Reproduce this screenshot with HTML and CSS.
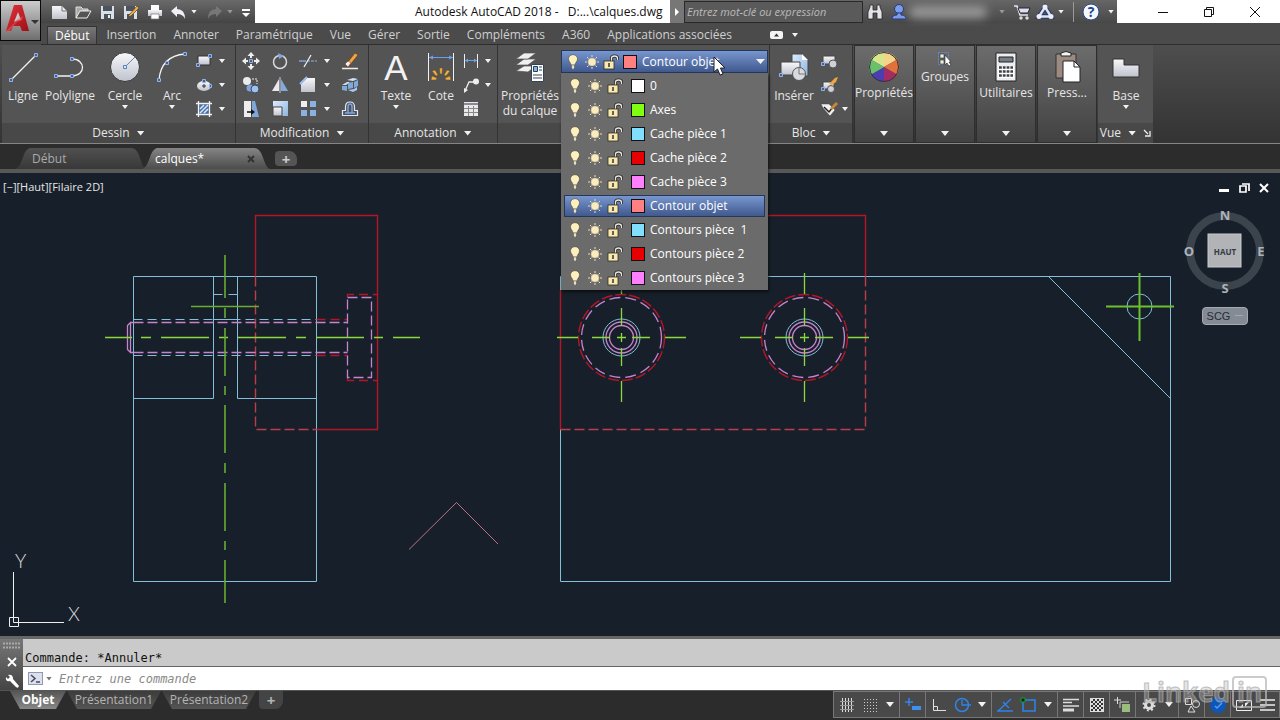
FILE: index.html
```html
<!DOCTYPE html>
<html lang="fr">
<head>
<meta charset="utf-8">
<title>Autodesk AutoCAD 2018 - calques.dwg</title>
<link rel="stylesheet" href="styles.css">
</head>
<body>
<svg class="sprite" aria-hidden="true">
  <defs>
    <linearGradient id="face" x1="0" y1="0" x2="0" y2="1"><stop offset="0" stop-color="#f8f8fb"/><stop offset="1" stop-color="#bfc2cc"/></linearGradient>
    <linearGradient id="faceBlue" x1="0" y1="0" x2="1" y2="1"><stop offset="0" stop-color="#dcecff"/><stop offset="1" stop-color="#8db4dc"/></linearGradient>
    <linearGradient id="redA" x1="0" y1="0" x2="1" y2="1"><stop offset="0" stop-color="#e2343c"/><stop offset="1" stop-color="#9c1018"/></linearGradient>
  </defs>
  <symbol id="bulb" viewBox="0 0 12 16"><path d="M6 .7c2.700 0 4.500 1.900 4.500 4.300C10.500 7.200 8.200 8.500 8 11H4C3.800 8.500 1.500 7.200 1.500 5 1.500 2.600 3.300.7 6 .7z" fill="#fdf0c0" stroke="#40391f" stroke-width=".5"/><path d="M4.500 11h3v2.500l-1 2h-1l-1-2z" fill="#e6dfc8" stroke="#333" stroke-width=".4"/></symbol>
  <symbol id="sun" viewBox="0 0 16 16"><path d="M8 1v2M8 13v2M1 8h2M13 8h2M3 3l1.500 1.500M11.500 11.500L13 13M13 3l-1.500 1.500M4.500 11.500L3 13" stroke="#e6dfc4" stroke-width="1"/><circle cx="8" cy="8" r="4" fill="#fbecc0" stroke="#b8ab80" stroke-width=".5"/></symbol>
  <symbol id="lock" viewBox="0 0 16 16"><path d="M8.500 8V4.500q0-2.500 3-2.500t3 2.500V6" fill="none" stroke="#222" stroke-width="3"/><path d="M8.500 8V4.500q0-2.500 3-2.500t3 2.500V6" fill="none" stroke="#e8e6dc" stroke-width="1.400"/><rect x="1" y="7" width="10" height="8" fill="#fae9b0" stroke="#302b1c" stroke-width=".8"/><path d="M6 9v4" stroke="#333" stroke-width="1.500"/></symbol>
</svg>

<header class="app-header">
  <button class="logo" aria-label="Menu de l'application">
    <svg width="38" height="36" viewBox="0 0 38 36"><path d="M4 28L12 2h8l7 26h-7l-2-5h-7l-2 5z" fill="url(#redA)"/><path d="M12 19l4-10 3 8q-4 0-7 2z" fill="#c9c9c9"/><path d="M4 28l12-12 5-3-1 4q-5 1-8 5l-4 6z" fill="#f05258" opacity=".6"/><path d="M29 17h8l-4 4z" fill="#333"/></svg>
  </button>
  <div class="titlebar">
    <div class="qat">
      <button aria-label="Nouveau"><svg width="20" height="18"><path d="M3 3h10l5 5v8H3z" fill="url(#face)"/><path d="M13 3v5h5" fill="none" stroke="#777"/></svg></button>
      <button aria-label="Ouvrir"><svg width="20" height="18"><path d="M3 15V4h5l2 2h5v2H8z" fill="#aaa" stroke="#ddd"/><path d="M3 15L7 8h11l-4 7z" fill="#555" stroke="#eee"/></svg></button>
      <button aria-label="Enregistrer"><svg width="20" height="18"><path d="M4 3h13v13H4z" fill="#dbe0e8"/><path d="M6 3h9v5H6zM7 11h7v5H7z" fill="#4b535e"/><path d="M11 12h2v3h-2z" fill="#eee"/></svg></button>
      <button aria-label="Enregistrer sous"><svg width="20" height="18"><path d="M3 3h13v13H3z" fill="#dbe0e8"/><path d="M5 3h9v5H5zM6 11h7v5H6z" fill="#4b535e"/><path d="M8 12l8-9 2 2-8 8-3 1z" fill="#eab04a" stroke="#5d3c0c" stroke-width=".7"/></svg></button>
      <button aria-label="Imprimer"><svg width="20" height="18"><path d="M6 2h8v5H6z" fill="#fff"/><path d="M3 7h14v6H3z" fill="url(#face)"/><path d="M6 11h8v5H6z" fill="#fff" stroke="#777" stroke-width=".7"/></svg></button>
      <button aria-label="Annuler"><svg width="20" height="18"><path d="M2 8l6-5v3q8 0 8 10-2-5-8-5v3z" fill="#eef0f4"/></svg></button><i class="caret"></i>
      <button aria-label="Rétablir"><svg width="20" height="18"><path d="M17 8l-6-5v3q-8 0-8 10 2-5 8-5v3z" fill="#777"/></svg></button><i class="caret dim"></i>
      <button class="more" aria-label="Personnaliser"><svg width="10" height="18"><path d="M1 6h8v2H1zM1 10h8l-4 4z" fill="#fff"/></svg></button>
    </div>
    <h1 class="doc-title">Autodesk AutoCAD 2018 -&nbsp;&nbsp; D:...\calques.dwg</h1>
    <div class="infocenter">
      <button class="expand" aria-label="Afficher"><svg width="12" height="20"><path d="M4 6l4 4-4 4z" fill="#fff"/></svg></button>
      <input class="search" type="text" placeholder="Entrez mot-clé ou expression" aria-label="Recherche">
      <button aria-label="Rechercher"><svg width="24" height="20"><path d="M5 17V10l2-5V3h3v5h4V3h3v2l2 5v7h-5v-6h-4v6z" fill="#e4e4e8" stroke="#26262a" stroke-width=".8"/></svg></button>
      <button class="user" aria-label="Compte"><svg width="20" height="20"><circle cx="10" cy="7" r="4.500" fill="#7b9cea" stroke="#243a78"/><path d="M3 17q0-4 5-4v-2h4v2q5 0 5 4z" fill="#7b9cea" stroke="#243a78"/></svg><span class="user-name"></span><i class="caret dim"></i></button>
      <button aria-label="App Store"><svg width="24" height="20"><path d="M4 4h3l3 9h8" fill="none" stroke="#e4e4ee" stroke-width="1.600"/><path d="M8 6h12l-2 5H10z" fill="#dde" stroke="#223"/><circle cx="11" cy="16" r="1.700" fill="#ddd"/><circle cx="17" cy="16" r="1.700" fill="#ddd"/></svg></button>
      <button aria-label="A360"><svg width="24" height="20"><path d="M11 5l6 9.500H5z" fill="none" stroke="#24386a" stroke-width="4.500"/><path d="M11 5l6 9.500H5z" fill="none" stroke="#dbe2f4" stroke-width="2.500"/><g fill="#eef"><circle cx="11" cy="5" r="2.500"/><circle cx="5" cy="14.500" r="2.500"/><circle cx="17" cy="14.500" r="2.500"/></g></svg></button><i class="caret"></i>
      <button class="help" aria-label="Aide"><svg width="20" height="20"><circle cx="10" cy="10" r="8" fill="#f5f7fc" stroke="#274a8a"/><text x="10" y="15" text-anchor="middle" class="help-mark">?</text></svg></button><i class="caret"></i>
    </div>
    <div class="window-controls">
      <button aria-label="Réduire"><svg width="12" height="12"><path d="M1 6.500h10" stroke="#111"/></svg></button>
      <button aria-label="Restaurer"><svg width="12" height="12"><path d="M1.500 3.500h7v7h-7zM3.500 3V1.500h7v7H9" fill="none" stroke="#111"/></svg></button>
      <button aria-label="Fermer"><svg width="12" height="12"><path d="M1 1l10 10M11 1L1 11" stroke="#111"/></svg></button>
    </div>
  </div>
  <nav class="ribbon-tabs">
    <button class="active">Début</button><button>Insertion</button><button>Annoter</button><button>Paramétrique</button><button>Vue</button><button>Gérer</button><button>Sortie</button><button>Compléments</button><button>A360</button><button>Applications associées</button>
    <button class="collapse" aria-label="Réduire le ruban"><svg width="14" height="8"><rect width="13" height="8" rx="2" fill="#f4f4f4"/><path d="M4 5.500h5L6.500 2.500z" fill="#333"/></svg><i class="caret"></i></button>
  </nav>
</header>

<section class="ribbon">
  <div class="panel">
    <div class="panel-body">
      <button class="big w40"><svg width="32" height="32"><path d="M4 29L29 4" stroke="#f2f2f2" stroke-width="1.300"/><g class="grip"><path d="M2.500 27.500h3v3h-3zM27.500 2.500h3v3h-3z"/></g></svg>Ligne</button>
      <button class="big w54"><svg width="32" height="32"><path d="M2 25h16c14 0 14-17 0-17" fill="none" stroke="#f2f2f2" stroke-width="1.300"/><g class="grip"><path d="M.5 23.500h3v3h-3zM16.500 23.500h3v3h-3zM16.500 6.500h3v3h-3z"/></g></svg>Polyligne</button>
      <button class="big w56"><svg width="32" height="32"><circle cx="16" cy="16" r="14.500" fill="url(#face)" stroke="#383838"/><path d="M16 16L26 6" stroke="#777fa0"/><g class="grip light"><path d="M14.500 14.500h3v3h-3z"/></g></svg>Cercle<i class="caret"></i></button>
      <button class="big w38"><svg width="32" height="32"><path d="M3 29Q5 5 29 3" fill="none" stroke="#f2f2f2" stroke-width="1.300"/><g class="grip"><path d="M1.500 27.500h3v3h-3zM9.500 10.500h3v3h-3zM27.500 1.500h3v3h-3z"/></g></svg>Arc<i class="caret"></i></button>
      <div class="tools draw-tools">
        <button aria-label="Rectangle"><svg width="18" height="18"><path d="M3 4h12v9H3z" fill="url(#face)" stroke="#333"/><g class="grip"><path d="M1.500 11.500h3v3h-3zM13.500 2.500h3v3h-3z"/></g></svg></button><i class="caret"></i>
        <button aria-label="Ellipse"><svg width="18" height="18"><ellipse cx="9" cy="10" rx="7" ry="5" fill="url(#face)"/><path d="M7 10h4M9 8v4" stroke="#333"/><g class="grip"><path d="M7.500 3.500h3v3h-3zM14.500 8.500h2v3h-2z"/></g></svg></button><i class="caret"></i>
        <button aria-label="Hachures"><svg width="18" height="18"><path d="M4 4h10v10H4z" fill="#496da5"/><path d="M1 3.500h16M1 14.500h16M3.500 1v16M14.500 1v16" stroke="#f2f2f2" stroke-width="1.300"/><path d="M5 9l4-4M5 13l8-8M9 13l4-4" stroke="#d8e8ff" stroke-width="1.500"/></svg></button><i class="caret"></i>
      </div>
    </div>
    <button class="panel-title">Dessin<i class="caret wide"></i></button>
  </div>
  <div class="panel">
    <div class="panel-body">
      <div class="tools modify-tools">
        <button aria-label="Déplacer"><svg width="18" height="18"><path d="M9 0l3.500 4h-7zM9 18l3.500-4h-7zM0 9l4-3.500v7zM18 9l-4-3.500v7zM8 4h2v2H8zM8 12h2v2H8zM4 8h2v2H4zM12 8h2v2h-2z" fill="#eee"/><g class="grip"><path d="M7.500 7.500h3v3h-3z"/></g></svg></button>
        <button aria-label="Rotation"><svg width="18" height="18"><circle cx="9" cy="10" r="6.500" fill="none" stroke="#d8d8de" stroke-width="1.500"/><path d="M7 1l6 3-5 3z" fill="#7fa5e0"/></svg></button>
        <button aria-label="Ajuster"><svg width="18" height="18"><path d="M0 9h7" stroke="#7ba2e2" stroke-width="1.500"/><path d="M8 9h10" stroke="#91b1e4" stroke-dasharray="3 1"/><path d="M5 15L12 3" stroke="#eee" stroke-width="1.300"/></svg></button><i class="caret"></i>
        <button aria-label="Effacer"><svg width="18" height="18"><path d="M6 11L14 1l3 2-8 10z" fill="#eea545" stroke="#6b3f10" stroke-width=".7"/><path d="M4 12l3-3 3 2-3 4z" fill="#f6ecea" stroke="#8a3a20" stroke-width=".6"/><path d="M1 16.500h16" stroke="#eee" stroke-width="1.500"/></svg></button>
        <button aria-label="Copier"><svg width="18" height="18"><circle cx="5" cy="5" r="4" fill="#e9e9ee"/><path d="M10 3h5v5" fill="none" stroke="#eee" stroke-dasharray="2 1"/><circle cx="8" cy="12" r="3.500" fill="#7ea4d8"/><circle cx="13" cy="13" r="4" fill="#9dc2f0" stroke="#446"/></svg></button>
        <button aria-label="Miroir"><svg width="18" height="18"><path d="M8 3v12H1z" fill="#e8e8ee"/><path d="M10 3v12h7z" fill="#83aadd"/><path d="M9 1v16" stroke="#ccc"/></svg></button>
        <button aria-label="Raccord"><svg width="18" height="18"><path d="M2 16V8l6-6h8v14z" fill="url(#face)"/><path d="M1 8l7-7" stroke="#9dbef0" stroke-width="2"/></svg></button><i class="caret"></i>
        <button aria-label="Décomposer"><svg width="18" height="18"><path d="M6 4l6-2 5 1-5 2zM1 9l5-3h3l-4 3z" fill="#cfe1f6"/><path d="M1 10h5v5l-5-1zM7 7l5-1v6l-5 1zM13 6l4-2v6l-4 2z" fill="#7fa9dc"/><path d="M7 14l6-1 3-2v3l-4 2z" fill="#a9c9ee"/></svg></button>
        <button aria-label="Etirer"><svg width="18" height="18"><path d="M2 1h7v16H2z" fill="#eee"/><path d="M10 1h3l4 16h-7z" fill="#7fa7da"/><path d="M5 12h5" stroke="#111" stroke-width="1.500"/><path d="M9 9l4 3-4 3z" fill="#111"/></svg></button>
        <button aria-label="Echelle"><svg width="18" height="18"><path d="M2 1h15v15H2z" fill="url(#faceBlue)"/><path d="M2 7h9v9H2z" fill="url(#face)" stroke="#444"/></svg></button>
        <button aria-label="Réseau"><svg width="18" height="18"><path d="M2 1h6v6H2z" fill="#eee"/><path d="M11 1h6v6h-6zM2 10h6v6H2zM11 10h6v6h-6z" fill="#89b1e2"/></svg></button><i class="caret"></i>
        <button aria-label="Décaler"><svg width="18" height="18"><path d="M1.500 15.500h15v-5h-3V7q0-5-4.500-5T4.500 7v3.500h-3z" fill="none" stroke="#dbe4f2" stroke-width="1.200"/><path d="M4 13h10M7 13V7q0-3 2-3t2 3v6" fill="none" stroke="#7ba7ec" stroke-width="1.400"/></svg></button>
      </div>
    </div>
    <button class="panel-title">Modification<i class="caret wide"></i></button>
  </div>
  <div class="panel">
    <div class="panel-body">
      <button class="big w52"><svg width="32" height="32"><text x="16" y="29" text-anchor="middle" class="text-icon">A</text></svg>Texte<i class="caret"></i></button>
      <button class="big w38"><svg width="32" height="32"><path d="M3.500 2v28M28.500 2v28" stroke="#f2f2f2"/><path d="M4 6.500h24" stroke="#6aa0ee"/><path d="M4 6.500l4-2v4zM28 6.500l-4-2v4z" fill="#6aa0ee"/><g fill="#eab04a" stroke="#714a12" stroke-width=".5"><path d="M14.500 17h3l-.5 6h-2zM7 20l3-1 3 5-2 1zM25 20l-3-1-3 5 2 1zM6 29l1-4 5 2-1 2zM26 29l-1-4-5 2 1 2z"/></g></svg>Cote</button>
      <div class="tools note-tools">
        <button aria-label="Linéaire"><svg width="18" height="18"><path d="M2.500 2v14M15.500 2v14" stroke="#eee"/><path d="M3 8.500h12" stroke="#6aa0ee"/><path d="M3 8.500l3-2v4zM15 8.500l-3-2v4z" fill="#6aa0ee"/></svg></button><i class="caret"></i>
        <button aria-label="Ligne de repère"><svg width="18" height="18"><path d="M3 15L7 6h6" fill="none" stroke="#eee" stroke-width="1.300"/><path d="M2 17l0-5 4 2z" fill="#eee"/><circle cx="14" cy="5.500" r="3" fill="#eee"/></svg></button><i class="caret"></i>
        <button aria-label="Tableau"><svg width="18" height="18"><path d="M2 2h14v14H2z" fill="#e9e9ec"/><path d="M2 3h14v2H2z" fill="#889"/><path d="M2 8.500h14M2 12.500h14M6.500 6v10M11.500 6v10" stroke="#888"/></svg></button><i></i>
      </div>
    </div>
    <button class="panel-title">Annotation<i class="caret wide"></i></button>
  </div>
  <div class="panel layers">
    <div class="panel-body">
      <button class="big w62"><svg width="32" height="32"><g fill="#f0f0f2" stroke="#555" stroke-width=".7"><path d="M2 20l8-5h12l-8 6z"/><path d="M2 14l8-6h12l-8 6z"/><path d="M2 8l8-6h12l-8 6z"/></g><path d="M17.500 13.500h12v17h-12z" fill="#fff" stroke="#345"/><path d="M19.500 15.500h4v5h-4z" fill="#89b1e2" stroke="#245"/><path d="M25 16h3M25 19h3M19 24h9M19 27h9" stroke="#345"/></svg>Propriétés<br>du calque</button>
      <div class="layer-combo">
        <button class="combo-head" aria-haspopup="listbox" aria-expanded="true">
          <svg class="bulb"><use href="#bulb"/></svg><svg class="sun"><use href="#sun"/></svg><svg class="lock"><use href="#lock"/></svg><span class="swatch salmon"></span><span>Contour objet</span><i class="caret"></i>
        </button>
        <ul class="layer-menu" role="listbox" aria-label="Calques">
          <li role="option"><svg class="bulb"><use href="#bulb"/></svg><svg class="sun"><use href="#sun"/></svg><svg class="lock"><use href="#lock"/></svg><span class="swatch white"></span>0</li>
          <li role="option"><svg class="bulb"><use href="#bulb"/></svg><svg class="sun"><use href="#sun"/></svg><svg class="lock"><use href="#lock"/></svg><span class="swatch green"></span>Axes</li>
          <li role="option"><svg class="bulb"><use href="#bulb"/></svg><svg class="sun"><use href="#sun"/></svg><svg class="lock"><use href="#lock"/></svg><span class="swatch cyan"></span>Cache pièce 1</li>
          <li role="option"><svg class="bulb"><use href="#bulb"/></svg><svg class="sun"><use href="#sun"/></svg><svg class="lock"><use href="#lock"/></svg><span class="swatch red"></span>Cache pièce 2</li>
          <li role="option"><svg class="bulb"><use href="#bulb"/></svg><svg class="sun"><use href="#sun"/></svg><svg class="lock"><use href="#lock"/></svg><span class="swatch pink"></span>Cache pièce 3</li>
          <li role="option" aria-selected="true" class="selected"><svg class="bulb"><use href="#bulb"/></svg><svg class="sun"><use href="#sun"/></svg><svg class="lock"><use href="#lock"/></svg><span class="swatch salmon"></span>Contour objet</li>
          <li role="option"><svg class="bulb"><use href="#bulb"/></svg><svg class="sun"><use href="#sun"/></svg><svg class="lock"><use href="#lock"/></svg><span class="swatch cyan"></span>Contours pièce&nbsp; 1</li>
          <li role="option"><svg class="bulb"><use href="#bulb"/></svg><svg class="sun"><use href="#sun"/></svg><svg class="lock"><use href="#lock"/></svg><span class="swatch red"></span>Contours pièce 2</li>
          <li role="option"><svg class="bulb"><use href="#bulb"/></svg><svg class="sun"><use href="#sun"/></svg><svg class="lock"><use href="#lock"/></svg><span class="swatch pink"></span>Contours pièce 3</li>
        </ul>
        <svg class="cursor" width="14" height="20"><path d="M1 1v15l3.500-3 2.500 6 3-1-2.500-6H12z" fill="#fff" stroke="#222"/></svg>
      </div>
    </div>
    <div class="panel-title"></div>
  </div>
  <div class="panel">
    <div class="panel-body">
      <button class="big w46"><svg width="32" height="32"><path d="M14 3h10l6 6v16H14z" fill="url(#faceBlue)" stroke="#444"/><path d="M24 3v6h6" fill="#fff"/><path d="M3 11h19v13H3z" fill="url(#face)" stroke="#444"/><circle cx="21" cy="23" r="6.500" fill="#d9dae0" stroke="#555"/><path d="M21 23V16M21 23h7" stroke="#777"/><g class="grip"><path d="M1.500 22.500h3v3h-3z"/></g></svg>Insérer</button>
      <div class="tools block-tools">
        <button aria-label="Créer un bloc"><svg width="18" height="18"><path d="M3 4h12v8H3z" fill="url(#face)" stroke="#444"/><circle cx="13" cy="12" r="4" fill="#cfd0d8" stroke="#555"/><g class="grip"><path d="M1.500 10.500h3v3h-3z"/></g></svg></button><i></i>
        <button aria-label="Modifier le bloc"><svg width="18" height="18"><path d="M3 6h11v7H3z" fill="url(#face)" stroke="#444"/><circle cx="11" cy="13" r="3.500" fill="#cfd0d8" stroke="#555"/><path d="M9 8l6-6 3-1-2 5-4 3z" fill="#f0a640"/><g class="grip"><path d="M1.500 11.500h3v3h-3z"/></g></svg></button><i></i>
        <button aria-label="Modifier les attributs"><svg width="18" height="18"><path d="M1 4h8l6 6-5 6-7-8z" fill="#f1f1f1" stroke="#444" stroke-width=".5"/><path d="M4 7l5 5 4-5" stroke="#222" fill="none" stroke-width="1.500"/><path d="M10 8l6-6 2 2-6 6z" fill="#c98738"/></svg></button><i class="caret"></i>
      </div>
    </div>
    <button class="panel-title">Bloc<i class="caret wide"></i></button>
  </div>
  <button class="folded"><svg width="32" height="32"><g><path d="M16 16L3 8.500A15 15 0 0 1 16 1z" fill="#d9e58a"/><path d="M16 16V1a15 15 0 0 1 13 7.500z" fill="#f4d488"/><path d="M16 16L29 8.500A15 15 0 0 1 29 23.500z" fill="#e0713a"/><path d="M16 16l13 7.500A15 15 0 0 1 16 31z" fill="#a32c64"/><path d="M16 16v15A15 15 0 0 1 3 23.500z" fill="#4b3fb0"/><path d="M16 16L3 23.500A15 15 0 0 1 3 8.500z" fill="#69c16d"/></g><circle cx="16" cy="16" r="14.500" fill="none" stroke="#333"/></svg><span>Propriétés</span><i class="caret wide"></i></button>
  <button class="folded groups"><svg width="16" height="16"><path d="M1.500 1.500h10v12h-10z" fill="none" stroke="#5d8cd2" stroke-dasharray="2 1"/><path d="M3 3h4v4H3zM3 9h4v4H3z" fill="#e9edd8" stroke="#333" stroke-width=".6"/><path d="M8 4v10l2-2 2 3 2-1-2-3h2z" fill="#fff" stroke="#222" stroke-width=".6"/></svg><span>Groupes</span><i class="caret wide"></i></button>
  <button class="folded"><svg width="32" height="32"><path d="M6 2h20v28H6z" fill="#eceef1" stroke="#222"/><path d="M9 6h14v5H9z" fill="#777d86" stroke="#222"/><path d="M8 15h16v12H8z" fill="#fff"/><path d="M9 16.500h14M9 20.500h14M9 24.500h14" stroke="#3d4148" stroke-width="2.500" stroke-dasharray="2.800 1"/></svg><span>Utilitaires</span><i class="caret wide"></i></button>
  <button class="folded"><svg width="32" height="32"><path d="M5 3h20v24H5z" fill="#9b8a80" stroke="#333"/><path d="M10 2q5-3 10 0v3H10z" fill="#f4f4f4" stroke="#222"/><path d="M12 10h11l6 6v15H12z" fill="#fff" stroke="#222"/><path d="M23 10v6h6" fill="none" stroke="#222"/></svg><span>Press...</span><i class="caret wide"></i></button>
  <div class="panel base">
    <div class="panel-body">
      <button class="big w54"><svg width="32" height="32"><path d="M3 8h11v6h15v12H3z" fill="url(#face)" stroke="#333"/></svg>Base<i class="caret"></i></button>
    </div>
    <button class="panel-title">Vue<i class="caret wide"></i><svg width="8" height="8"><path d="M1 1l4 4M7 2v5H2" stroke="#eee" fill="none" stroke-width="1.300"/></svg></button>
  </div>
</section>

<nav class="file-tabs">
  <button class="file-tab">Début</button>
  <button class="file-tab current">calques*<svg width="8" height="8"><path d="M1 1l6 6M7 1L1 7" stroke="#333" stroke-width="2"/></svg></button>
  <button class="add-tab" aria-label="Nouveau dessin">+</button>
</nav>

<main class="viewport">
  <svg class="drawing" viewBox="0 173 1280 463" preserveAspectRatio="xMinYMin meet" role="img" aria-label="Dessin">
    <g class="blue">
      <path d="M133.500 276.500h183v305h-183zM213.500 276.500v122M237.500 276.500v122M133.500 398.500h80M237.500 398.500h79M213.500 319.500h24"/>
      <path d="M213.500 294.500h24" stroke-dasharray="9 6"/>
      <path d="M133.500 319.500h183M133.500 355.500h183" stroke-dasharray="9 5"/>
      <path d="M560.500 276.500h610v305h-610zM1048.500 276.500l122 122"/>
      <circle cx="1139.500" cy="306.500" r="12.500"/><circle cx="621.500" cy="337.500" r="18.500"/><circle cx="804.500" cy="337.500" r="18.500"/>
    </g>
    <g class="crimson">
      <path d="M255.500 276.500v-61h122v214h-61M560.500 290v139.500M768 215.500h97.500v61"/>
      <path class="bottom-edge" d="M255.500 276.500v153h61M865.500 276.500v153h-305" stroke-dasharray="10 4"/>
      <path d="M316.500 319.500h31M316.500 355.500h31M347.500 297v-2.500h30M347.500 378v2.500h30" stroke-dasharray="9 5"/>
      <circle cx="621.500" cy="337.500" r="43" stroke-dasharray="11 3"/><circle cx="804.500" cy="337.500" r="43" stroke-dasharray="11 3"/>
    </g>
    <g class="mauve">
      <path d="M133.500 322.500h214M133.500 352.500h214" stroke-dasharray="10 4"/>
      <path d="M347.500 297.500h24v80h-24z" stroke-dasharray="10 4"/>
      <path d="M133.500 322.500h-3v30h3M130.500 322.500l-3 3v24l3 3"/>
      <g><circle cx="621.500" cy="337.500" r="15.500"/><circle cx="621.500" cy="337.500" r="12"/><circle cx="804.500" cy="337.500" r="15.500"/><circle cx="804.500" cy="337.500" r="12"/></g>
      <circle cx="621.500" cy="337.500" r="40" stroke-dasharray="11 5"/><circle cx="804.500" cy="337.500" r="40" stroke-dasharray="11 5"/>
    </g>
    <g class="axis">
      <path d="M105 337.500h27M141 337.500h10M161 337.500h48M219 337.500h9M238 337.500h48M296 337.500h10M316 337.500h48M374 337.500h9M393 337.500h27"/>
      <path d="M191 306.500h68M225 255v43M225 308v10M225 328v48M225 386v9M225 405v48M225 463v10M225 483v48M225 541v9M225 560v43" class="olive"/>
      <path d="M557 337.500h21M592 337.500h18M617 337.500h9M632 337.500h18M665 337.500h21M621.500 273v21M621.500 308v18M621.500 333v9M621.500 348v18M621.500 381v21"/>
      <path d="M740 337.500h21M775 337.500h18M800 337.500h9M815 337.500h18M848 337.500h21M804.500 273v21M804.500 308v18M804.500 333v9M804.500 348v18M804.500 381v21"/>
      <path d="M1106 306.500h68M1139.500 273v68" class="bold"/>
    </g>
    <path d="M409 549.500l47.500-47 41.500 41.500" class="chevron"/>
    <g class="ucs"><path d="M13.500 572v50.500H64M9.500 617.500h9v9h-9z"/><text x="15" y="568">Y</text><text x="68" y="621">X</text></g>
  </svg>
  <div class="view-label"><button>[−]</button><button>[Haut]</button><button>[Filaire 2D]</button></div>
  <div class="view-nav">
    <div class="mdi-controls">
      <button aria-label="Réduire la vue"><svg width="12" height="12"><path d="M1 7h10v3H1z" fill="#fff"/></svg></button>
      <button aria-label="Restaurer la vue"><svg width="12" height="12"><path d="M2 4h6v6H2zM4 2h7v7" fill="none" stroke="#fff" stroke-width="1.700"/></svg></button>
      <button aria-label="Fermer la vue"><svg width="12" height="12"><path d="M2 2l8 8M10 2l-8 8" stroke="#fff" stroke-width="2"/></svg></button>
    </div>
    <svg class="cube" width="90" height="90" role="img" aria-label="ViewCube">
      <circle cx="45" cy="45" r="35" fill="none" stroke="#3b434d" stroke-width="8"/>
      <rect x="28" y="28" width="33" height="33" fill="#b1b3b6" stroke="#c9cacc"/>
      <g class="cube-letters"><text x="45" y="14">N</text><text x="81" y="50">E</text><text x="45" y="87">S</text><text x="9" y="50">O</text></g><text x="45" y="49" class="cube-face">HAUT</text>
    </svg>
    <button class="ucs-button">SCG <svg width="8" height="4"><path d="M0 1.500h8" stroke="#a4a9b4"/></svg></button>
  </div>
</main>

<section class="command">
  <div class="command-rail">
    <svg width="20" height="7"><path d="M1 1.500h18M1 5.500h18" stroke="#aaa" stroke-width="2" stroke-dasharray="2 1"/></svg>
    <button aria-label="Fermer"><svg width="12" height="12"><path d="M2 2l8 8M10 2l-8 8" stroke="#fff" stroke-width="1.800"/></svg></button>
    <button aria-label="Personnaliser"><svg width="16" height="16"><path d="M2 3l2 2 2-2-2-2q5-1 5 4l6 7q-1 3-3 1L6 7Q1 8 2 3z" fill="#fff"/></svg></button>
  </div>
  <div class="command-main">
    <output class="command-log">Commande: *Annuler*</output>
    <div class="command-entry"><button aria-label="Commandes récentes"><svg width="16" height="14"><rect x=".5" y=".5" width="14" height="12" fill="#dce0ee" stroke="#9298ad"/><path d="M3 3l4 3.500L3 10M8 10h4" fill="none" stroke="#444a60" stroke-width="1.500"/></svg><i class="caret"></i></button><input type="text" placeholder="Entrez une commande" aria-label="Commande"></div>
  </div>
</section>

<footer class="status">
  <nav class="layout-tabs"><button class="w56 current">Objet</button><button class="w94">Présentation1</button><button class="w94">Présentation2</button><button class="plus" aria-label="Nouvelle présentation">+</button></nav>
  <div class="status-tools">
    <div class="cell"><button aria-label="Grille"><svg width="18" height="18"><path d="M4.500 2v14M7.500 2v14M10.500 2v14M13.500 2v14" stroke="#ddd"/><path d="M2 5.500h14M2 9.500h14M2 13.500h14" stroke="#999"/></svg></button><button aria-label="Résolution"><svg width="18" height="18"><path d="M3 3.500h13M3 6.500h13M3 9.500h13M3 12.500h13M3 15.500h13" stroke="#ccc" stroke-dasharray="1 2"/></svg></button><i class="caret wide"></i></div>
    <div class="cell"><button aria-label="Saisie dynamique"><svg width="18" height="18"><path d="M1 6h8M5 2v8" stroke="#3385ea" stroke-width="1.500"/><path d="M8 10h9v4H8z" fill="#3c90f4"/></svg></button></div>
    <div class="cell"><button aria-label="Ortho"><svg width="18" height="18"><path d="M3.500 3v11.500H16M3.500 10.500h4v4" fill="none" stroke="#e0e0e0"/></svg></button><button aria-label="Repérage polaire"><svg width="18" height="18"><circle cx="9" cy="9" r="6.500" fill="none" stroke="#2d84ec" stroke-width="1.500"/><path d="M9 4v5h9" fill="none" stroke="#2d84ec" stroke-width="1.300"/></svg></button><i class="caret wide"></i></div>
    <div class="cell"><button aria-label="Repérage aux objets"><svg width="18" height="18"><path d="M1 15h16M2 15L15 3M7 6l6 6" stroke="#2d84ec" stroke-width="1.400"/></svg></button><button aria-label="Accrochage"><svg width="18" height="18"><path d="M4 4h12v11H4z" fill="none" stroke="#2d84ec" stroke-width="1.500"/><path d="M2 2h4v4H2z" fill="#052b0a" stroke="#1f9c34"/></svg></button><i class="caret wide"></i></div>
    <div class="cell"><button aria-label="Epaisseur"><svg width="18" height="18"><path d="M1 3.500h16M1 6.500h9M1 10h16" stroke="#ddd" stroke-width="1.500"/><path d="M1 14h11" stroke="#ddd" stroke-width="3"/></svg></button></div>
    <div class="cell"><button aria-label="Transparence"><svg width="18" height="18"><rect x="2.500" y="2.500" width="13" height="13" fill="#333" stroke="#ddd"/><path d="M3 4h12M3 8h12M3 12h12" stroke="#ddd" stroke-width="2" stroke-dasharray="2 2"/><path d="M5 6h10M5 10h10M5 14h10" stroke="#ddd" stroke-width="2" stroke-dasharray="2 2"/></svg></button></div>
    <div class="cell"><button aria-label="Cycle de sélection"><svg width="18" height="18"><path d="M0 4h7M3.500 1v7" stroke="#ddd"/><path d="M6 12V6h9" stroke="#ccc" fill="none"/><path d="M8 8h8v8H8z" fill="#9abd7e"/></svg></button></div>
    <div class="cell"><button aria-label="Espace de travail"><svg width="18" height="18"><circle cx="9" cy="9" r="3.500" fill="none" stroke="#ddd" stroke-width="3"/><circle cx="9" cy="9" r="5.500" fill="none" stroke="#ddd" stroke-width="2" stroke-dasharray="2 2.300"/></svg></button><i class="caret wide"></i></div>
    <div class="cell"><button aria-label="Annotation"><svg width="18" height="18"><path d="M2.500 2.500h6v6h-6z" fill="none" stroke="#ddd"/><circle cx="13" cy="8" r="3.500" fill="none" stroke="#ddd"/><path d="M8 10l4 6H5z" fill="none" stroke="#ddd"/></svg></button></div>
    <div class="cell"><button aria-label="Performances"><svg width="18" height="18"><circle cx="9" cy="9" r="8" fill="#0c57b8"/><path d="M6 10l2 2 5-5" stroke="#5c9cf0" fill="none" stroke-width="1.500"/></svg></button></div>
    <div class="cell"><button aria-label="Plein écran"><svg width="18" height="18"><path d="M1.500 4.500h15v10h-15z" fill="none" stroke="#eee"/><path d="M4 12l4-4v4zM14 6l-4 1v4z" fill="#eee"/></svg></button><button aria-label="Personnalisation"><svg width="18" height="18"><path d="M2 4h15M2 9h15M2 14h15" stroke="#eee" stroke-width="1.500"/></svg></button></div>
  </div>
</footer>
<div class="watermark">Linked<span>in</span></div>
</body>
</html>
```
FILE: styles.css
```css
* { box-sizing: border-box; }
body { margin: 0; min-height: 100vh; display: flex; flex-direction: column; overflow: hidden; position: relative; background: #2c2c2c; color: #e6e6e6; font: 12px/16px "Open Sans", "Noto Sans", sans-serif; }
button { background: none; border: 0; padding: 0; margin: 0; color: inherit; font: inherit; display: flex; align-items: center; justify-content: center; white-space: nowrap; }
input { font: inherit; border: 0; outline: 0; min-width: 0; }
svg { display: block; flex: none; }
.sprite { position: absolute; width: 0; height: 0; }
.caret { flex: none; width: 6px; height: 4px; background: #f2f2f2; clip-path: polygon(0 0, 100% 0, 50% 100%); }
.caret.wide { width: 8px; height: 5px; }
.caret.dim { background: #999; }
.grip path { fill: #50607c; stroke: #8eb2f2; }
.grip.light path { fill: #dbe8ff; stroke: #5580c0; }

/* Title bar and ribbon tabs */
.app-header { display: grid; grid-template: 24px 21px / 41px 1fr; background: #4b4b4b; }
.logo { grid-row: 1 / 3; height: 41px; background: linear-gradient(#ccc, #6f6f6f); border: 1px solid #0a0a0a; }
.titlebar { display: flex; background: #fff; border-bottom: 1px solid #4a4a4a; }
.qat { display: flex; align-items: center; width: 214px; padding-left: 6px; background: linear-gradient(#6a6a6a, #444); }
.qat button { width: 24px; }
.qat .caret { margin-right: 6px; }
.qat .more { width: 14px; }
.doc-title { flex: 1; margin: 0; padding-left: 160px; font-size: 12px; font-weight: 400; line-height: 24px; color: #111; white-space: nowrap; }
.infocenter { display: flex; align-items: center; width: 447px; background: linear-gradient(#666, #484848); }
.expand { width: 14px; align-self: stretch; background: #777; }
.search { width: 179px; height: 22px; padding: 0 2px; background: #5a5a5a; border: 1px solid #2a2a2a; color: #ccc; font-style: italic; font-size: 11px; }
.search::placeholder { color: #bbb; opacity: 1; }
.user-name { width: 78px; height: 12px; margin-right: 12px; background: #999; filter: blur(5px); border-radius: 6px; }
.user { padding: 0 5px 0 2px; }
.help { border-left: 1px solid #999; margin-left: 9px; padding-left: 7px; margin-right: 7px; }
.help-mark { fill: #1a4890; font: 700 14px "Open Sans", sans-serif; }
.window-controls { display: flex; width: 163px; padding-left: 23px; }
.window-controls button { width: 46px; }
.ribbon-tabs { display: flex; gap: 1px; padding-left: 6px; border-bottom: 1px solid #2e2e2e; color: #d0d0d0; }
.ribbon-tabs button { padding: 2px 8px 0; }
.ribbon-tabs .active { background: linear-gradient(#777, #555); border: 1px solid #333; border-bottom: 0; color: #fff; padding: 0 7px; margin-top: 2px; }
.ribbon-tabs .collapse { gap: 8px; margin-left: 21px; }

/* Ribbon */
.ribbon { display: flex; height: 99px; padding-left: 2px; background: linear-gradient(#4e4e4e, #333); border-bottom: 1px solid #858585; }
.panel { display: flex; flex-direction: column; background: #545454; border-right: 1px solid #333; }
.panel-body { display: flex; flex: 1; padding-left: 1px; }
.panel-title { height: 20px; background: #484848; gap: 7px; width: 100%; }
.big { flex-direction: column; justify-content: flex-start; padding-top: 6px; line-height: 15px; }
.big svg { margin-bottom: 5px; }
.big .caret { margin-top: 2px; }
.w38 { width: 38px; } .w40 { width: 40px; } .w46 { width: 46px; } .w52 { width: 52px; } .w54 { width: 54px; } .w56 { width: 56px; } .w62 { width: 62px; } .w94 { width: 94px; }
.tools { display: grid; grid-auto-rows: 24px; align-items: center; align-content: start; padding-top: 4px; justify-items: center; }
.draw-tools { grid-template-columns: 26px 10px; padding-right: 8px; }
.modify-tools { grid-template-columns: 28px 29px 28px 10px 36px; }
.note-tools { grid-template-columns: 22px 12px; padding-right: 3px; }
.block-tools { grid-template-columns: 23px 10px; padding-right: 2px; }
.text-icon { fill: #f2f2f2; font: 35px "Liberation Sans", sans-serif; }
.layers { width: 272px; }
.layer-combo { position: relative; width: 207px; padding-top: 5px; }
.combo-head, .layer-menu li { display: flex; align-items: center; }
.combo-head { justify-content: flex-start; width: 100%; height: 23px; padding: 0 2px 0 5px; border: 1px solid #26375c; background: linear-gradient(#7896cf, #40598e); color: #fff; }
.combo-head .caret { width: 9px; height: 5px; margin-left: auto; }
.layer-menu { position: absolute; z-index: 5; top: 28px; left: 0; width: 207px; margin: 0; padding: 2px 3px 1px; display: grid; gap: 2px; list-style: none; background: #6b6b6b; box-shadow: 1px 2px 3px #0009; color: #fff; }
.layer-menu li { height: 22px; padding-left: 4px; border: 1px solid transparent; white-space: pre; }
.layer-menu .selected { background: linear-gradient(#7896cf, #40598e); border-color: #26375c; }
.bulb { width: 12px; height: 16px; margin-right: 6px; }
.sun { width: 16px; height: 16px; margin-right: 4px; }
.lock { width: 16px; height: 16px; margin-right: 8px; }
.combo-head .bulb { margin-right: 5px; }
.combo-head .sun { margin-right: 3px; }
.combo-head .lock { margin-right: 4px; }
.swatch { flex: none; width: 14px; height: 14px; margin-right: 5px; border: 1px solid #111; }
.white { background: #fff; } .green { background: #80ff10; } .cyan { background: #80dfff; } .red { background: #e80000; } .pink { background: #ff80ff; } .salmon { background: #ff8080; }
.cursor { position: absolute; z-index: 6; left: 152px; top: 11px; }
.folded { position: relative; flex-direction: column; justify-content: flex-start; width: 58px; margin: 1px 1px 1px 2px; padding: 5px 0 6px; background: linear-gradient(#6c6c6c, #424242); box-shadow: 0 0 0 1px #2e2e2e; }
.folded span { margin-top: 2px; }
.folded .caret { margin-top: auto; }
.base { margin-left: 1px; border: 0; }

/* Drawing tabs */
.file-tabs { display: flex; align-items: end; height: 29px; padding-left: 15px; background: #2c2c2c; border-bottom: 4px solid #585858; }
.file-tab { height: 21px; width: 131px; justify-content: flex-start; padding-left: 17px; background: linear-gradient(#505050, #383838); color: #aaa; clip-path: path("M0 21C8 19 7 2 15 0H116C126 0 125 19 131 21Z"); }
.file-tab.current { justify-content: space-between; width: 128px; margin-left: -4px; padding: 0 15px 0 13px; background: linear-gradient(#858585, #4c4c4c); color: #fff; clip-path: path("M0 21C8 19 7 2 15 0H112C122 0 121 19 128 21Z"); }
.add-tab { width: 22px; height: 15px; margin: 0 0 3px 5px; border-radius: 4px 8px 4px 4px; background: #555; color: #ccc; font-size: 15px; font-weight: 700; }

/* Model space */
.viewport { position: relative; flex: 1; min-height: 300px; background: #17202a; }
.drawing { position: absolute; inset: 0; width: 100%; height: 100%; fill: none; }
.blue { stroke: #83bfd7; }
.crimson { stroke: #b41626; stroke-width: 1.4px; }
.bottom-edge { stroke: #bd3c48; }
.mauve { stroke: #c882ce; stroke-width: 1.3px; }
.axis { stroke: #8bd83c; stroke-width: 1.3px; }
.olive { stroke: #68ac30; stroke-width: 1.6px; }
.bold { stroke: #6cc030; stroke-width: 2px; }
.chevron { stroke: #bd7180; }
.ucs path { stroke: #eee; }
.ucs text { fill: #ddd; font: 300 19px Lato, sans-serif; }
.view-label { position: absolute; left: 3px; top: 6px; display: flex; font-size: 11px; }
.view-nav { position: absolute; top: 9px; right: 10px; display: flex; flex-direction: column; align-items: center; width: 90px; }
.mdi-controls { display: flex; gap: 8px; align-self: flex-end; margin-bottom: 12px; }
.cube-letters text { fill: #aeb2b8; font: 700 13px "Open Sans", sans-serif; text-anchor: middle; }
.cube-face { fill: #363b42; font: 700 8px "Open Sans", sans-serif; text-anchor: middle; }
.ucs-button { width: 46px; height: 18px; margin-top: 11px; gap: 5px; border: 1px solid #a4a8b0; border-radius: 4px; background: #858b95; color: #252b35; font: 11px "Liberation Sans", sans-serif; }

/* Command line */
.command { display: flex; height: 54px; border-top: 3px solid #666; color: #111; font: 12px/16px "DejaVu Sans Mono", monospace; }
.command-rail { width: 23px; display: flex; flex-direction: column; align-items: center; justify-content: space-between; padding: 3px 0 0; background: linear-gradient(#777, #444); }
.command-main { flex: 1; display: flex; flex-direction: column; }
.command-log { flex: 1; padding: 11px 2px 0; background: #cacaca; border-bottom: 1px solid #666; }
.command-entry { display: flex; height: 23px; padding-left: 5px; background: #fff; }
.command-entry button { gap: 2px; }
.command-entry .caret { background: #777; }
.command-entry input { flex: 1; padding: 0 0 0 7px; font-style: italic; background: none; }
.command-entry input::placeholder { color: #8a8a8a; opacity: 1; }

/* Layout tabs and status bar */
.status { display: flex; justify-content: space-between; align-items: flex-start; height: 30px; background: #2c2c2c; border-top: 1px solid #555; }
.layout-tabs { display: flex; padding-left: 10px; gap: 1px; color: #b4b4b4; }
.layout-tabs button { height: 18px; background: linear-gradient(#3c3c3c, #555); clip-path: polygon(0 0, 100% 0, calc(100% - 10px) 100%, 10px 100%); }
.layout-tabs .current { background: linear-gradient(#555, #888); color: #fff; font-weight: 700; }
.layout-tabs .plus { width: 24px; clip-path: none; margin: 0 2px; border-radius: 0 0 8px 4px; background: #444; font-size: 15px; font-weight: 700; }
.status-tools { display: flex; }
.cell { display: flex; align-items: center; height: 27px; padding: 0 3px 0 4px; gap: 5px; border: 1px solid #777; border-left-width: 0; background: #494949; }
.cell:first-child { border-left-width: 1px; }
.cell .caret { margin: 0 2px; }
.watermark { position: absolute; right: 13px; bottom: 12px; display: flex; align-items: center; gap: 2px; color: #bbb6; font: 700 26px/32px "Open Sans", sans-serif; -webkit-text-stroke: 1px #aaab; pointer-events: none; }
.watermark span { padding: 0 3px; line-height: 28px; border: 2px solid #b8b8b8bb; border-radius: 4px; }
```
